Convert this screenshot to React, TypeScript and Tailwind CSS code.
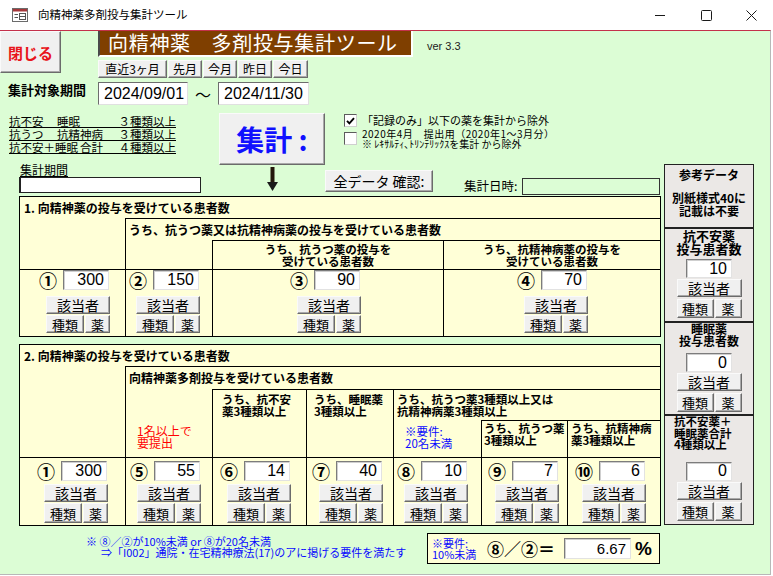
import React from "react";

type P = { children?: React.ReactNode; className?: string };

function Btn({ children, className = "" }: P) {
  return (
    <div
      className={`flex items-center justify-center shrink-0 bg-[#f0f0f0] border border-t-[#fafafa] border-l-[#fafafa] border-r-[#6b6b6b] border-b-[#6b6b6b] shadow-[inset_-1px_-1px_0_#a9a9a9] leading-none whitespace-nowrap ${className}`}
    >
      {children}
    </div>
  );
}

function Field({ children, className = "" }: P) {
  return (
    <div
      className={`flex items-center justify-end shrink-0 bg-white border border-t-[#7c7c7c] border-l-[#7c7c7c] border-r-[#e2e2e2] border-b-[#e2e2e2] shadow-[inset_1px_1px_0_#cfcfcf] pr-[4px] font-['Liberation_Sans',sans-serif] leading-none ${className}`}
    >
      {children}
    </div>
  );
}

function Check({ checked = false }: { checked?: boolean }) {
  return (
    <div className="w-[13px] h-[13px] shrink-0 bg-white border border-t-[#5c5c5c] border-l-[#5c5c5c] border-r-[#cfcfcf] border-b-[#cfcfcf] flex items-center justify-center">
      {checked && (
        <svg width="9" height="8" viewBox="0 0 9 8">
          <path d="M1 3.8 L3.4 6.3 L8 1.2" stroke="#000" strokeWidth="1.9" fill="none" />
        </svg>
      )}
    </div>
  );
}

function Group({ n, v, s1 = false }: { n: string; v: string; s1?: boolean }) {
  return (
    <div className="flex flex-col w-[64px]">
      <div className="flex items-center justify-between -ml-[7px] mr-[1px] h-[20px]">
        <span className="font-bold text-[18px] leading-none">{n}</span>
        <Field className="w-[46px] h-[20px] text-[16px]">{v}</Field>
      </div>
      <Btn className={`h-[18px] text-[14px] ${s1 ? "mt-[6px]" : "mt-[3px]"}`}>該当者</Btn>
      <div className="flex gap-[1px] mt-[1px]">
        <Btn className={`w-[38px] text-[13px] ${s1 ? "h-[18px]" : "h-[20px]"}`}>種類</Btn>
        <Btn className={`flex-1 text-[13px] ${s1 ? "h-[18px]" : "h-[20px]"}`}>薬</Btn>
      </div>
    </div>
  );
}

function PanelGroup({ v, className = "" }: { v: string; className?: string }) {
  return (
    <div className={`flex flex-col items-center ${className}`}>
      <Field className="w-[46px] h-[19px] text-[16px]">{v}</Field>
      <Btn className="w-[65px] h-[18px] text-[14px] mt-[1px]">該当者</Btn>
      <div className="flex gap-[1px] mt-[2px]">
        <Btn className="w-[37px] h-[19px] text-[13px]">種類</Btn>
        <Btn className="w-[27px] h-[19px] text-[13px]">薬</Btn>
      </div>
    </div>
  );
}

function TitleBar() {
  return (
    <div className="h-[30px] flex items-center bg-white">
      <svg className="ml-[12px]" width="16" height="14" viewBox="0 0 16 14">
        <rect x="0.5" y="0.5" width="15" height="13" fill="#fff" stroke="#6b6b6b" />
        <rect x="1" y="1" width="14" height="2.5" fill="#a4373a" />
        <path d="M2.5 6.5h3.5M2.5 9.5h3.5" stroke="#555" />
        <rect x="7.5" y="5.5" width="6" height="6" fill="none" stroke="#555" />
        <path d="M7.5 8.5h6" stroke="#555" />
      </svg>
      <span className="ml-[10px] text-[11.5px] leading-none">向精神薬多剤投与集計ツール</span>
      <div className="ml-auto flex h-full">
        <div className="w-[46px] flex items-center justify-center">
          <svg width="10" height="10" viewBox="0 0 10 10">
            <path d="M0 5.5h10" stroke="#1a1a1a" strokeWidth="1" />
          </svg>
        </div>
        <div className="w-[46px] flex items-center justify-center">
          <svg width="11" height="11" viewBox="0 0 11 11">
            <rect x="0.5" y="0.5" width="10" height="10" rx="1" fill="none" stroke="#1a1a1a" />
          </svg>
        </div>
        <div className="w-[44px] flex items-center justify-center">
          <svg width="11" height="11" viewBox="0 0 11 11">
            <path d="M0.5 0.5L10.5 10.5M10.5 0.5L0.5 10.5" stroke="#1a1a1a" strokeWidth="1" />
          </svg>
        </div>
      </div>
    </div>
  );
}

const hdrS = "text-[11.5px] font-bold leading-[12px] whitespace-nowrap";

export default function App() {
  return (
    <div className="w-[773px] h-[576px] bg-white overflow-hidden font-['Noto_Sans_CJK_JP',sans-serif] text-black">
      <TitleBar />
      <div className="w-[771px] h-[545px] bg-[#dcfdd5] border-t border-r border-b border-t-[#c4314b] border-r-[#b8b8b8] border-b-[#b8b8b8]">
        {/* header row */}
        <div className="flex items-start">
          <Btn className="w-[61px] h-[42px] text-[15px] font-bold text-[#e8141b]">閉じる</Btn>
          <div className="ml-[37px] flex flex-col">
            <div className="w-[315px] h-[26px] bg-[#7f3f00] border-l-2 border-r-2 border-b-2 border-l-[#4a4a4a] border-r-white border-b-white flex items-center pl-[8px] text-white text-[20px] leading-none tracking-[0.7px] whitespace-nowrap">
              向精神薬　多剤投与集計ツール
            </div>
            <div className="flex gap-[1px] mt-[3px]">
              <Btn className="w-[69px] h-[18px] text-[12px]">直近3ヶ月</Btn>
              <Btn className="w-[34px] h-[18px] text-[12px]">先月</Btn>
              <Btn className="w-[34px] h-[18px] text-[12px]">今月</Btn>
              <Btn className="w-[34px] h-[18px] text-[12px]">昨日</Btn>
              <Btn className="w-[35px] h-[18px] text-[12px]">今日</Btn>
            </div>
          </div>
          <div className="ml-[14px] mt-[10px] text-[11px] leading-none text-[#222] font-['Liberation_Sans',sans-serif]">ver 3.3</div>
        </div>

        {/* period row */}
        <div className="flex items-start mt-[4px] h-[23px]">
          <div className="w-[98px] pl-[8px] pt-[1px] text-[13px] font-bold leading-[13px] whitespace-nowrap">集計対象期間</div>
          <div className="w-[90px] h-[23px] bg-white border border-t-[#6d6d6d] border-l-[#6d6d6d] border-r-[#e0e0e0] border-b-[#e0e0e0] flex items-center pl-[5px] text-[16px] leading-none font-['Liberation_Sans',sans-serif]">2024/09/01</div>
          <div className="w-[30px] h-[23px] flex items-center justify-center text-[16px] leading-none">〜</div>
          <div className="w-[91px] h-[23px] bg-white border border-t-[#6d6d6d] border-l-[#6d6d6d] border-r-[#e0e0e0] border-b-[#e0e0e0] flex items-center pl-[5px] text-[16px] leading-none font-['Liberation_Sans',sans-serif]">2024/11/30</div>
        </div>

        {/* main area */}
        <div className="flex items-start">
          <div className="w-[664px] flex flex-col">
            {/* M1 */}
            <div className="flex items-start h-[60px]">
              <div className="w-[219px] pl-[9px] pt-[10px]">
                <div className="w-[167px] text-[11.5px] leading-[12px] whitespace-nowrap">
                  <div className="flex h-[13px] border-b border-black">
                    <span className="w-[48px]">抗不安</span>
                    <span>睡眠</span>
                    <span className="ml-auto">３種類以上</span>
                  </div>
                  <div className="flex h-[13px] border-b border-black">
                    <span className="w-[48px]">抗うつ</span>
                    <span>抗精神病</span>
                    <span className="ml-auto">３種類以上</span>
                  </div>
                  <div className="flex h-[13px] border-b border-black">
                    <span>抗不安＋睡眠</span>
                    <span className="ml-[2px]">合計</span>
                    <span className="ml-auto">４種類以上</span>
                  </div>
                </div>
              </div>
              <Btn className="mt-[8px] w-[106px] h-[52px] text-[28px] font-bold text-[#1010ff]">集計 :</Btn>
              <div className="ml-[19px] mt-[9px] flex flex-col">
                <div className="flex items-center h-[13px]">
                  <Check checked />
                  <span className="ml-[5px] text-[11px] leading-none whitespace-nowrap">「記録のみ」以下の薬を集計から除外</span>
                </div>
                <div className="flex items-start mt-[5px]">
                  <Check />
                  <div className="ml-[5px] -mt-[3px] flex flex-col whitespace-nowrap">
                    <span className="text-[10px] leading-[10px] tracking-[0.5px]">2020年4月　提出用（2020年1〜3月分）</span>
                    <span className="text-[10px] leading-[10px]">※ ﾚｷｻﾙﾃｨ､ﾄﾘﾝﾃﾘｯｸｽを集計 から除外</span>
                  </div>
                </div>
              </div>
            </div>

            {/* M2 */}
            <div className="flex items-start -mt-[2px] h-[33px]">
              <div className="w-[219px] flex flex-col">
                <div className="pl-[20px] h-[14px] text-[12px] leading-[13px] underline underline-offset-[1px]">集計期間</div>
                <div className="ml-[19px] w-[182px] h-[16px] bg-white border border-[#222] border-l-2" />
              </div>
              <div className="w-[106px] flex justify-center pt-[4px]">
                <svg width="11" height="24" viewBox="0 0 11 24">
                  <rect x="3.5" y="0" width="4" height="17" fill="#24170c" />
                  <path d="M0 15 L11 15 L5.5 24 Z" fill="#1a1a1a" />
                </svg>
              </div>
              <Btn className="mt-[7px] w-[108px] h-[22px] text-[14px]">全データ 確認:</Btn>
              <div className="ml-[31px] mt-[16px] text-[12.5px] leading-[13px] whitespace-nowrap">集計日時:</div>
              <div className="ml-auto mr-[4px] mt-[15px] w-[138px] h-[17px] border border-[#333]" />
            </div>

            {/* Section 1 */}
            <div className="ml-[19px] w-[642px] h-[141px] border border-black bg-[#ffffd7] grid grid-cols-[105px_87px_231px_217px] grid-rows-[21px_22px_29px_67px]">
              <div className="col-span-4 pl-[4px] flex items-center text-[12px] font-bold leading-none">1. 向精神薬の投与を受けている患者数</div>
              <div className="row-span-2" />
              <div className="col-span-3 border-t border-l border-black pl-[3px] flex items-center text-[12px] font-bold leading-none whitespace-nowrap">
                うち、抗うつ薬又は抗精神病薬の投与を受けている患者数
              </div>
              <div className="border-l border-black" />
              <div className={`border-l border-t border-black text-center pt-[2px] ${hdrS}`}>
                うち、抗うつ薬の投与を
                <br />
                受けている患者数
              </div>
              <div className={`border-l border-t border-black text-center pt-[2px] ${hdrS}`}>
                うち、抗精神病薬の投与を
                <br />
                受けている患者数
              </div>
              <div className="border-t border-black pl-[26px]">
                <Group n="①" v="300" s1 />
              </div>
              <div className="border-t border-l border-black pl-[10px]">
                <Group n="②" v="150" s1 />
              </div>
              <div className="border-t border-l border-black pl-[84px]">
                <Group n="③" v="90" s1 />
              </div>
              <div className="border-t border-l border-black pl-[80px]">
                <Group n="④" v="70" s1 />
              </div>
            </div>

            {/* Section 2 */}
            <div className="ml-[19px] mt-[7px] w-[642px] h-[182px] border border-black bg-[#ffffd7] grid grid-cols-[105px_87px_94px_87px_88px_86px_93px] grid-rows-[21px_23px_31px_37px_68px]">
              <div className="col-span-7 pl-[4px] flex items-center text-[12px] font-bold leading-none">2. 向精神薬の投与を受けている患者数</div>
              <div className="row-span-3" />
              <div className="col-span-6 border-t border-l border-black pl-[3px] flex items-center text-[12px] font-bold leading-none">
                向精神薬多剤投与を受けている患者数
              </div>
              <div className="row-span-2 border-l border-black pl-[11px] pt-[36px] text-[12px] leading-[12px] text-[#ff0000] whitespace-nowrap">
                1名以上で
                <br />
                要提出
              </div>
              <div className={`row-span-2 border-l border-t border-black pl-[9px] pt-[3px] ${hdrS}`}>
                うち、抗不安
                <br />
                薬3種類以上
              </div>
              <div className={`row-span-2 border-l border-t border-black pl-[7px] pt-[3px] ${hdrS}`}>
                うち、睡眠薬
                <br />
                3種類以上
              </div>
              <div className={`col-span-3 border-l border-t border-black pl-[3px] pt-[3px] ${hdrS}`}>
                うち、抗うつ薬3種類以上又は
                <br />
                抗精神病薬3種類以上
              </div>
              <div className="border-l border-black pl-[11px] pt-[5px] text-[11.5px] leading-[12px] text-[#0a0aff] whitespace-nowrap">
                ※要件:
                <br />
                20名未満
              </div>
              <div className={`border-l border-t border-black pl-[2px] pt-[1px] ${hdrS}`}>
                うち、抗うつ薬
                <br />
                3種類以上
              </div>
              <div className={`border-l border-t border-black pl-[3px] pt-[1px] ${hdrS}`}>
                うち、抗精神病
                <br />
                薬3種類以上
              </div>
              <div className="border-t border-black pl-[24px] pt-[3px]">
                <Group n="①" v="300" />
              </div>
              <div className="border-t border-l border-black pl-[11px] pt-[3px]">
                <Group n="⑤" v="55" />
              </div>
              <div className="border-t border-l border-black pl-[14px] pt-[3px]">
                <Group n="⑥" v="14" />
              </div>
              <div className="border-t border-l border-black pl-[12px] pt-[3px]">
                <Group n="⑦" v="40" />
              </div>
              <div className="border-t border-l border-black pl-[10px] pt-[3px]">
                <Group n="⑧" v="10" />
              </div>
              <div className="border-t border-l border-black pl-[13px] pt-[3px]">
                <Group n="⑨" v="7" />
              </div>
              <div className="border-t border-l border-black pl-[14px] pt-[3px]">
                <Group n="⑩" v="6" />
              </div>
            </div>

            {/* notes */}
            <div className="flex items-start mt-[7px]">
              <div className="ml-[86px] mt-[3px] text-[11px] leading-[11px] text-[#0a0aff] whitespace-nowrap">
                <div>※ ⑧／②が10%未満 or ⑧が20名未満</div>
                <div className="pl-[15px]">⇒「I002」通院・在宅精神療法(17)のアに掲げる要件を満たす</div>
              </div>
              <div className="ml-auto mr-[4px] w-[233px] h-[31px] border border-black bg-[#ffffd7] flex items-center">
                <div className="w-[59px] pl-[4px] text-[11px] leading-[11px] text-[#0a0aff] whitespace-nowrap">
                  ※要件:
                  <br />
                  10%未満
                </div>
                <div className="text-[17px] font-bold leading-none whitespace-nowrap">⑧／②＝</div>
                <Field className="ml-[9px] w-[67px] h-[21px] text-[15px]">6.67</Field>
                <div className="ml-[4px] text-[19px] font-bold leading-none font-['Liberation_Sans',sans-serif]">%</div>
              </div>
            </div>
          </div>

          {/* right panel */}
          <div className="mt-[59px] w-[90px] h-[361px] border border-[#222] bg-[#ebe8e6] flex flex-col">
            <div className="h-[62px] flex flex-col items-center text-[12px] font-bold leading-[12px] whitespace-nowrap">
              <div className="mt-[4px]">参考データ</div>
              <div className="mt-[11px]">別紙様式40に</div>
              <div className="mt-[1px]">記載は不要</div>
            </div>
            <div className="h-[94px] border-t-2 border-[#222] flex flex-col items-center">
              <div className="text-[13px] font-bold leading-[13px] text-center whitespace-nowrap">
                抗不安薬
                <br />
                投与患者数
              </div>
              <PanelGroup v="10" className="mt-[4px]" />
            </div>
            <div className="h-[93px] border-t-2 border-[#222] flex flex-col items-center">
              <div className="text-[12px] font-bold leading-[12px] text-center whitespace-nowrap">
                睡眠薬
                <br />
                投与患者数
              </div>
              <PanelGroup v="0" className="mt-[6px]" />
            </div>
            <div className="flex-1 border-t-2 border-[#222] flex flex-col">
              <div className="pl-[9px] text-[11.5px] font-bold leading-[11.5px] whitespace-nowrap">
                抗不安薬＋
                <br />
                睡眠薬合計
                <br />
                4種類以上
              </div>
              <PanelGroup v="0" className="mt-[11px]" />
            </div>
          </div>
        </div>
      </div>
    </div>
  );
}
